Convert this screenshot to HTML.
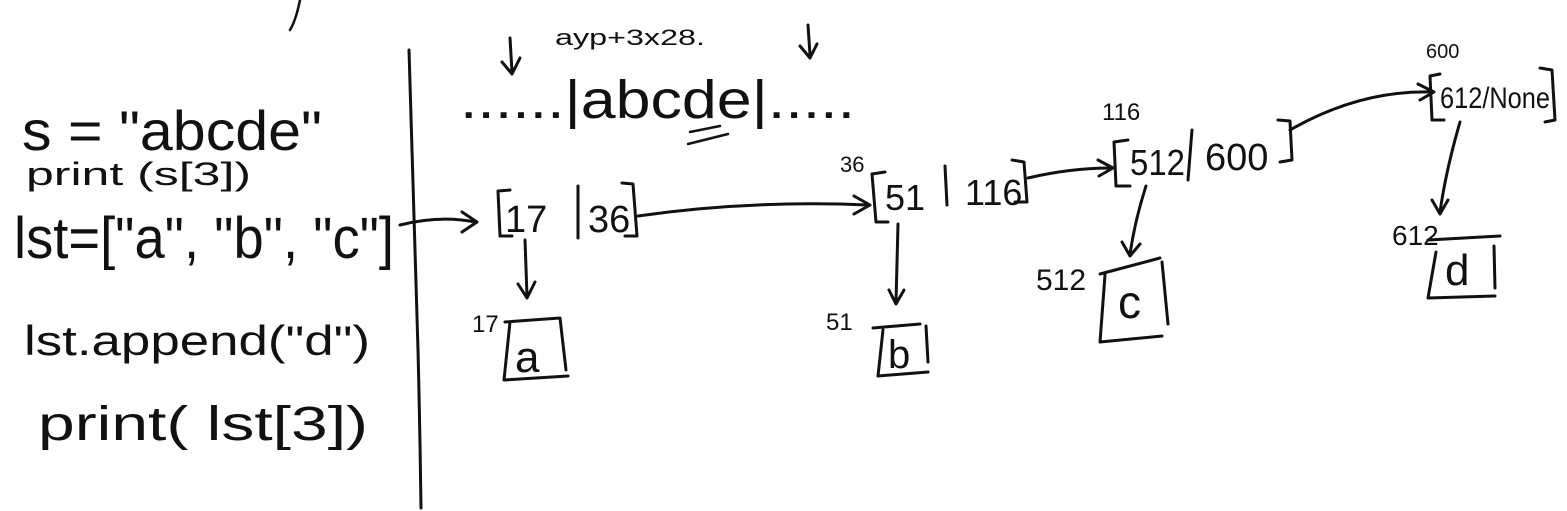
<!DOCTYPE html>
<html><head><meta charset="utf-8"><style>
html,body{margin:0;padding:0;background:#fff;width:1567px;height:511px;overflow:hidden}
svg{display:block}
text{font-family:"Liberation Sans",sans-serif;fill:#111}
</style></head><body>
<svg width="1567" height="511" viewBox="0 0 1567 511" fill="none" stroke="#111" stroke-width="3" stroke-linecap="round" stroke-linejoin="round">
<path d="M409 50 Q414 200 418 350 Q420 430 421 508"/>
<path d="M300 0 Q296 20 290 30" stroke-width="2.5"/>
<g stroke="none">
<text x="22" y="150" font-size="56" textLength="300" lengthAdjust="spacingAndGlyphs">s = "abcde"</text>
<text x="26" y="185" font-size="32" textLength="225" lengthAdjust="spacingAndGlyphs">print (s[3])</text>
<text x="14" y="258" font-size="58" textLength="380" lengthAdjust="spacingAndGlyphs">lst=["a", "b", "c"]</text>
<text x="24" y="355" font-size="42" textLength="346" lengthAdjust="spacingAndGlyphs">lst.append("d")</text>
<text x="38" y="440" font-size="48" textLength="330" lengthAdjust="spacingAndGlyphs">print( lst[3])</text>
<text x="555" y="45" font-size="22" textLength="150" lengthAdjust="spacingAndGlyphs">ayp+3x28.</text>
<text x="460" y="118" font-size="54" textLength="395" lengthAdjust="spacingAndGlyphs">......|abcde|.....</text>
<text x="840" y="172" font-size="22">36</text>
<text x="1102" y="120" font-size="24">116</text>
<text x="1426" y="58" font-size="20">600</text>
<text x="472" y="332" font-size="24">17</text>
<text x="826" y="330" font-size="24">51</text>
<text x="1036" y="290" font-size="30">512</text>
<text x="1392" y="245" font-size="28">612</text>
<text x="505" y="232" font-size="38">17</text>
<text x="588" y="232" font-size="38">36</text>
<text x="885" y="210" font-size="36">51</text>
<text x="965" y="205" font-size="36">116</text>
<text x="1130" y="175" font-size="36" textLength="55" lengthAdjust="spacingAndGlyphs">512</text>
<text x="1205" y="170" font-size="38">600</text>
<text x="1440" y="108" font-size="30" textLength="110" lengthAdjust="spacingAndGlyphs">612/None</text>
<text x="515" y="372" font-size="44">a</text>
<text x="888" y="368" font-size="40">b</text>
<text x="1118" y="318" font-size="46">c</text>
<text x="1445" y="285" font-size="44">d</text>
</g>
<path d="M690 132 L720 126 M688 144 L728 134" stroke-width="2.5"/>
<path d="M510 38 L512 72 M502 62 L512 74 L520 58"/>
<path d="M808 25 L810 55 M800 46 L810 58 L817 44"/>
<path d="M510 190 L498 191 L500 236 L512 236"/>
<path d="M578 186 L578 238"/>
<path d="M622 183 L633 184 L637 236 L625 236"/>
<path d="M885 172 L872 174 L876 222 L888 222"/>
<path d="M945 166 L947 205"/>
<path d="M1012 160 L1024 162 L1027 202 L1015 202"/>
<path d="M1128 140 L1114 142 L1116 186 L1130 186"/>
<path d="M1192 130 L1188 180"/>
<path d="M1278 120 L1290 121 L1292 160 L1280 162"/>
<path d="M1440 74 L1430 76 L1432 120 L1444 120"/>
<path d="M1540 68 L1552 70 L1555 120 L1545 122"/>
<path d="M400 225 Q440 215 475 222 M462 212 L477 222 L462 232"/>
<path d="M638 216 Q750 200 868 205 M854 196 L870 205 L854 214"/>
<path d="M1028 178 Q1070 168 1112 168 M1098 160 L1113 168 L1099 176"/>
<path d="M1290 130 Q1360 90 1432 92 M1418 84 L1434 92 L1420 100"/>
<path d="M525 240 L527 296 M518 284 L527 298 L535 282"/>
<path d="M898 224 L896 302 M889 290 L896 304 L904 290"/>
<path d="M1146 186 Q1135 220 1130 254 M1122 242 L1130 256 L1140 244"/>
<path d="M1460 122 Q1446 170 1440 212 M1432 200 L1440 214 L1448 200"/>
<path d="M510 322 L504 380 L568 376 M505 322 L560 318 M560 318 L566 370"/>
<path d="M873 328 L920 324 M883 330 L878 376 L928 372 M926 326 L928 362"/>
<path d="M1100 274 L1160 258 M1105 275 L1100 342 L1162 336 M1162 262 L1168 324"/>
<path d="M1428 240 L1500 236 M1436 252 L1428 298 L1495 296 M1494 246 L1495 288"/>
</svg>
</body></html>
